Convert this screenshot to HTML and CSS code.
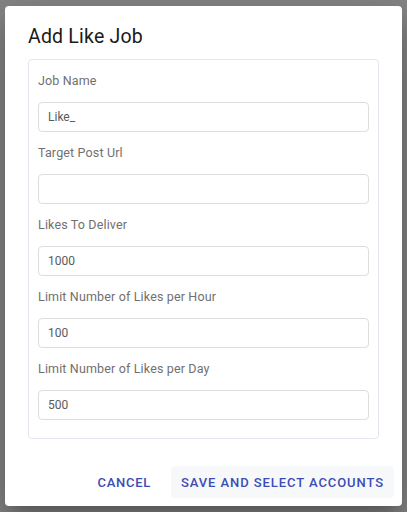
FILE: index.html
```html
<!DOCTYPE html>
<html lang="en">
<head>
<meta charset="utf-8">
<title>Add Like Job</title>
<link rel="stylesheet" href="styles.css">
</head>
<body>
<div class="dialog">
  <h2 class="dialog-title">Add Like Job</h2>
  <div class="form-card">
    <div class="field">
      <label class="field-label">Job Name</label>
      <div class="field-input">Like_</div>
    </div>
    <div class="field">
      <label class="field-label">Target Post Url</label>
      <div class="field-input"></div>
    </div>
    <div class="field">
      <label class="field-label">Likes To Deliver</label>
      <div class="field-input">1000</div>
    </div>
    <div class="field">
      <label class="field-label">Limit Number of Likes per Hour</label>
      <div class="field-input">100</div>
    </div>
    <div class="field">
      <label class="field-label">Limit Number of Likes per Day</label>
      <div class="field-input">500</div>
    </div>
  </div>
  <div class="dialog-actions">
    <button class="btn btn-cancel">Cancel</button>
    <button class="btn btn-filled">Save and Select Accounts</button>
  </div>
</div>
</body>
</html>
```

FILE: styles.css
```css
html, body {
  margin: 0;
  padding: 0;
}
body {
  width: 407px;
  height: 512px;
  background: #858585;
  font-family: Roboto, "Liberation Sans", sans-serif;
  overflow: hidden;
}
.dialog {
  box-sizing: border-box;
  margin: 6px 0 0 5px;
  width: 397px;
  height: 500px;
  background: #ffffff;
  border-radius: 4px;
  box-shadow: 0 11px 15px -7px rgba(0,0,0,0.2), 0 24px 38px 3px rgba(0,0,0,0.14), 0 9px 46px 8px rgba(0,0,0,0.12);
  padding: 18px 23px 8px 23px;
  display: flex;
  flex-direction: column;
}
.dialog-title {
  margin: 0;
  font-size: 19.5px;
  font-weight: 400;
  line-height: 26px;
  color: #1a1a1a;
  letter-spacing: 0.2px;
}
.form-card {
  margin-top: 9px;
  border: 1px solid #e2e7ef;
  border-radius: 4px;
  padding: 12px 9px 18px 9px;
  display: flex;
  flex-direction: column;
  gap: 12px;
}
.field {
  display: flex;
  flex-direction: column;
  gap: 12px;
}
.field-label {
  font-size: 12.5px;
  line-height: 18px;
  color: #707070;
  letter-spacing: 0.15px;
}
.field-input {
  box-sizing: border-box;
  height: 30px;
  border: 1px solid #dedede;
  border-radius: 4px;
  padding: 0 9px;
  font-size: 12px;
  line-height: 28px;
  color: #5a5a5a;
}
.dialog-actions {
  margin-top: auto;
  display: flex;
  justify-content: flex-end;
  align-items: center;
  gap: 12px;
  margin-right: -15px;
}
.btn {
  font-family: Roboto, "Liberation Sans", sans-serif;
  font-size: 13px;
  font-weight: 500;
  text-transform: uppercase;
  letter-spacing: 0.92px;
  color: #3b4db3;
  background: transparent;
  border: none;
  border-radius: 4px;
  height: 32px;
  padding: 0 8px;
  cursor: pointer;
}
.btn-cancel {
  letter-spacing: 0.7px;
}
.btn-filled {
  background: #f7f8fa;
  padding: 0 10px;
}
```
